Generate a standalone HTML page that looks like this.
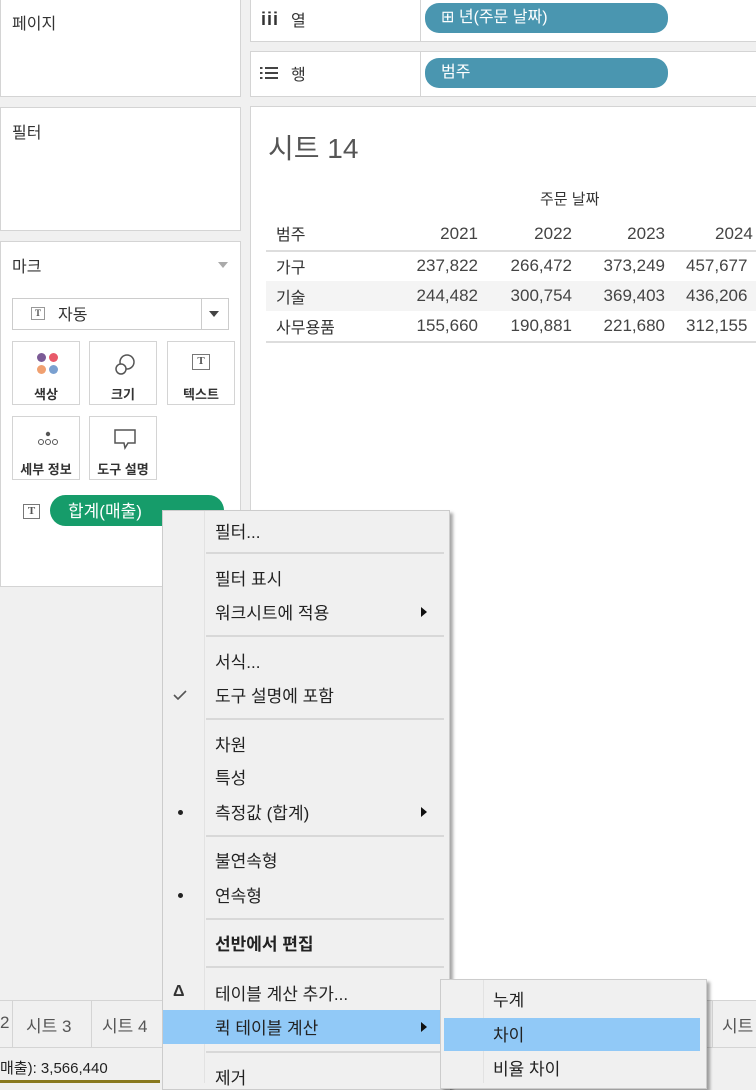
<!DOCTYPE html>
<html><head><meta charset="utf-8"><style>
*{margin:0;padding:0;box-sizing:border-box}
body{width:756px;height:1083px;overflow:hidden;background:#f0f0f0;position:relative;font-family:"Liberation Sans","Noto Sans CJK KR",sans-serif;color:#333}
.a{position:absolute}
.card{position:absolute;background:#fff;border:1px solid #d4d4d4}
.t{position:absolute;white-space:nowrap}
.pill{position:absolute;background:#4a96b0;color:#fff;border-radius:14px;font-size:16px;padding-left:16px;line-height:30px}
.btn{position:absolute;background:#fff;border:1px solid #d4d4d4;width:68px;height:64px;font-size:13px;font-weight:bold;text-align:center}
.btn span{position:absolute;left:0;right:0;top:42px}
.num{position:absolute;font-size:17px;text-align:right;width:100px;color:#444}
.mi{position:absolute;left:215px;font-size:17px;color:#222;white-space:nowrap}
.sep{position:absolute;left:206px;width:238px;height:2px;background:#d8d8d8}
.ti{position:absolute;width:18px;height:16px;border:1.5px solid #777;font-size:11px;line-height:13px;text-align:center;color:#555;font-family:"Liberation Serif",serif;font-weight:bold}
.arr{position:absolute;left:421px;width:0;height:0;border-top:5px solid transparent;border-bottom:5px solid transparent;border-left:6px solid #111}
</style></head><body>
<div class="card" style="left:0;top:-2px;width:241px;height:99px"></div>
<div class="t" style="left:12px;top:10px;font-size:16px">페이지</div>
<div class="card" style="left:0;top:107px;width:241px;height:124px"></div>
<div class="t" style="left:12px;top:119px;font-size:16px">필터</div>
<div class="card" style="left:0;top:241px;width:241px;height:346px"></div>
<div class="t" style="left:12px;top:253px;font-size:16px">마크</div>
<div class="a" style="left:218px;top:262px;border-left:5px solid transparent;border-right:5px solid transparent;border-top:6px solid #aaa"></div>
<div class="a" style="left:12px;top:298px;width:217px;height:32px;border:1px solid #ccc;background:#fff"></div>
<div class="a" style="left:201px;top:299px;width:1px;height:30px;background:#ccc"></div>
<div class="a" style="left:209px;top:311px;border-left:5px solid transparent;border-right:5px solid transparent;border-top:6px solid #444"></div>
<div class="ti" style="left:31px;top:307px;width:14px;height:13px;font-size:9px;line-height:10px;border-color:#999">T</div>
<div class="t" style="left:58px;top:301px;font-size:16px">자동</div>
<div class="btn" style="left:12px;top:341px"><span>색상</span>
<div class="a" style="left:24px;top:11px;width:9px;height:9px;border-radius:50%;background:#7b5b96"></div>
<div class="a" style="left:36px;top:11px;width:9px;height:9px;border-radius:50%;background:#e85a6a"></div>
<div class="a" style="left:24px;top:23px;width:9px;height:9px;border-radius:50%;background:#f0a070"></div>
<div class="a" style="left:36px;top:23px;width:9px;height:9px;border-radius:50%;background:#7aa0d0"></div></div>
<div class="btn" style="left:89px;top:341px"><span>크기</span>
<svg class="a" style="left:22px;top:10px" width="26" height="26"><circle cx="15" cy="10" r="7" fill="none" stroke="#555" stroke-width="1.5"/><circle cx="9" cy="17" r="5" fill="#fff" stroke="#555" stroke-width="1.5"/></svg></div>
<div class="btn" style="left:167px;top:341px"><span>텍스트</span><div class="ti" style="left:24px;top:12px">T</div></div>
<div class="btn" style="left:12px;top:416px"><span>세부 정보</span>
<svg class="a" style="left:22px;top:10px" width="26" height="26"><circle cx="13" cy="7" r="2.2" fill="#555"/><circle cx="6" cy="15" r="2.5" fill="none" stroke="#555"/><circle cx="13" cy="15" r="2.5" fill="none" stroke="#555"/><circle cx="20" cy="15" r="2.5" fill="none" stroke="#555"/></svg></div>
<div class="btn" style="left:89px;top:416px"><span>도구 설명</span>
<svg class="a" style="left:22px;top:10px" width="26" height="26"><path d="M3 3h20v13h-7l-3 5l-1-5H3z" fill="none" stroke="#555" stroke-width="1.5"/></svg></div>
<div class="ti" style="left:23px;top:504px;width:17px;height:15px">T</div>
<div class="a" style="left:50px;top:495px;width:174px;height:31px;background:#169c6a;border-radius:16px"></div>
<div class="t" style="left:68px;top:497px;font-size:17px;color:#fff">합계(매출)</div>
<div class="card" style="left:250px;top:-2px;width:510px;height:44px"></div>
<div class="a" style="left:420px;top:0;width:1px;height:41px;background:#d4d4d4"></div>
<div class="t" style="left:261px;top:9px;font-size:18px;font-weight:bold;letter-spacing:1px">iii</div>
<div class="t" style="left:291px;top:7px;font-size:16px">열</div>
<div class="pill" style="left:425px;top:3px;width:243px">⊞ 년(주문 날짜)</div>
<div class="card" style="left:250px;top:51px;width:510px;height:46px"></div>
<div class="a" style="left:420px;top:52px;width:1px;height:44px;background:#d4d4d4"></div>
<svg class="a" style="left:260px;top:66px" width="18" height="14"><g fill="#444"><rect x="0" y="1" width="2.5" height="2"/><rect x="0" y="6" width="2.5" height="2"/><rect x="0" y="11" width="2.5" height="2"/><rect x="5" y="1" width="13" height="2"/><rect x="5" y="6" width="13" height="2"/><rect x="5" y="11" width="13" height="2"/></g></svg>
<div class="t" style="left:291px;top:61px;font-size:16px">행</div>
<div class="pill" style="left:425px;top:58px;width:243px">범주</div>
<div class="card" style="left:250px;top:106px;width:510px;height:895px"></div>
<div class="t" style="left:268px;top:127px;font-size:28px;color:#555">시트 14</div>
<div class="t" style="left:540px;top:188px;font-size:15px">주문 날짜</div>
<div class="t" style="left:276px;top:221px;font-size:16px">범주</div>
<div class="num" style="left:378px;top:224px">2021</div>
<div class="num" style="left:472px;top:224px">2022</div>
<div class="num" style="left:565px;top:224px">2023</div>
<div class="t" style="left:715px;top:224px;font-size:17px;color:#444">2024</div>
<div class="a" style="left:266px;top:250px;width:490px;height:2px;background:#ddd"></div>
<div class="a" style="left:266px;top:281px;width:490px;height:30px;background:#f4f4f4"></div>
<div class="a" style="left:266px;top:341px;width:490px;height:2px;background:#ddd"></div>
<div class="t" style="left:276px;top:254px;font-size:16px">가구</div>
<div class="t" style="left:276px;top:284px;font-size:16px">기술</div>
<div class="t" style="left:276px;top:314px;font-size:16px">사무용품</div>
<div class="num" style="left:378px;top:256px">237,822</div><div class="num" style="left:472px;top:256px">266,472</div><div class="num" style="left:565px;top:256px">373,249</div><div class="t" style="left:686px;top:256px;font-size:17px;color:#444">457,677</div>
<div class="num" style="left:378px;top:286px">244,482</div><div class="num" style="left:472px;top:286px">300,754</div><div class="num" style="left:565px;top:286px">369,403</div><div class="t" style="left:686px;top:286px;font-size:17px;color:#444">436,206</div>
<div class="num" style="left:378px;top:316px">155,660</div><div class="num" style="left:472px;top:316px">190,881</div><div class="num" style="left:565px;top:316px">221,680</div><div class="t" style="left:686px;top:316px;font-size:17px;color:#444">312,155</div>
<div class="a" style="left:0;top:1000px;width:756px;height:47px;background:#f0f0f0;border-top:1px solid #d4d4d4"></div>
<div class="a" style="left:12px;top:1001px;width:1px;height:46px;background:#d4d4d4"></div>
<div class="a" style="left:91px;top:1001px;width:1px;height:46px;background:#d4d4d4"></div>
<div class="t" style="left:0;top:1013px;font-size:17px;color:#555">2</div>
<div class="t" style="left:26px;top:1012px;font-size:17px;color:#555">시트 3</div>
<div class="t" style="left:102px;top:1012px;font-size:17px;color:#555">시트 4</div>
<div class="a" style="left:712px;top:1001px;width:1px;height:46px;background:#d4d4d4"></div>
<div class="t" style="left:722px;top:1012px;font-size:17px;color:#555">시트</div>
<div class="a" style="left:0;top:1047px;width:756px;height:36px;background:#f0f0f0;border-top:1px solid #d4d4d4"></div>
<div class="t" style="left:0;top:1057px;font-size:15px;color:#222">매출): 3,566,440</div>
<div class="a" style="left:0;top:1080px;width:160px;height:3px;background:#8a7a20"></div>
<div class="a" style="left:162px;top:510px;width:288px;height:580px;background:#f0f0f0;border:1px solid #ccc;box-shadow:3px 3px 3px rgba(0,0,0,.35)"></div>
<div class="a" style="left:204px;top:511px;width:1px;height:572px;background:#e2e2e2"></div>
<div class="mi" style="top:518px">필터...</div>
<div class="sep" style="top:552px"></div>
<div class="mi" style="top:565px">필터 표시</div>
<div class="mi" style="top:599px">워크시트에 적용</div>
<div class="arr" style="top:607px"></div>
<div class="sep" style="top:635px"></div>
<div class="mi" style="top:648px">서식...</div>
<svg class="a" style="left:173px;top:690px" width="14" height="10"><path d="M1 5l4 4l8-8" fill="none" stroke="#555" stroke-width="1.6"/></svg>
<div class="mi" style="top:682px">도구 설명에 포함</div>
<div class="sep" style="top:718px"></div>
<div class="mi" style="top:731px">차원</div>
<div class="mi" style="top:764px">특성</div>
<div class="a" style="left:178px;top:810px;width:5px;height:5px;border-radius:50%;background:#222"></div>
<div class="mi" style="top:799px">측정값 (합계)</div>
<div class="arr" style="top:807px"></div>
<div class="sep" style="top:835px"></div>
<div class="mi" style="top:847px">불연속형</div>
<div class="a" style="left:178px;top:893px;width:5px;height:5px;border-radius:50%;background:#222"></div>
<div class="mi" style="top:882px">연속형</div>
<div class="sep" style="top:918px"></div>
<div class="mi" style="top:930px;font-weight:bold">선반에서 편집</div>
<div class="sep" style="top:966px"></div>
<div class="t" style="left:173px;top:983px;font-size:16px;font-weight:bold">Δ</div>
<div class="mi" style="top:980px">테이블 계산 추가...</div>
<div class="a" style="left:163px;top:1010px;width:278px;height:34px;background:#91c9f7"></div>
<div class="mi" style="top:1014px">퀵 테이블 계산</div>
<div class="arr" style="top:1022px"></div>
<div class="sep" style="top:1051px"></div>
<div class="mi" style="top:1064px">제거</div>
<div class="a" style="left:440px;top:979px;width:267px;height:110px;background:#f0f0f0;border:1px solid #ccc;box-shadow:3px 3px 3px rgba(0,0,0,.35)"></div>
<div class="a" style="left:483px;top:980px;width:1px;height:103px;background:#e2e2e2"></div>
<div class="t" style="left:493px;top:986px;font-size:17px;color:#222">누계</div>
<div class="a" style="left:444px;top:1018px;width:256px;height:33px;background:#91c9f7"></div>
<div class="t" style="left:493px;top:1021px;font-size:17px;color:#222">차이</div>
<div class="t" style="left:493px;top:1055px;font-size:17px;color:#222">비율 차이</div>
</body></html>
